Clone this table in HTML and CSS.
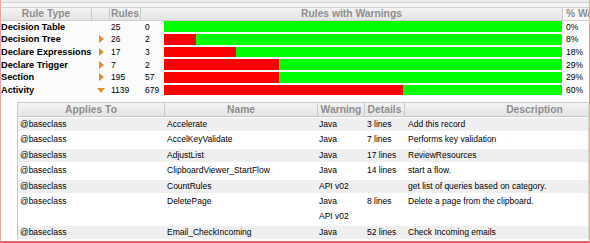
FILE: index.html
```html
<!DOCTYPE html>
<html lang="en">
<head>
  <meta charset="UTF-8">
  <title>Rules with Warnings</title>
  <link rel="stylesheet" href="styles.css">
</head>
<body>
  <div class="frame">
    <div class="top-strip"></div>

    <div class="summary">
      <div class="hcell">Rule Type</div>
      <div class="hcell"></div>
      <div class="hcell">Rules</div>
      <div class="hcell hcell-wide">Rules with Warnings</div>
      <div class="hcell hcell-pct">% Warnings</div>

      <div class="cell name">Decision Table</div>
      <div class="cell"></div>
      <div class="cell num">25</div>
      <div class="cell num2">0</div>
      <div class="cell"><div class="bar"><span class="bar-red" style="width:0%"></span></div></div>
      <div class="cell pct">0%</div>

      <div class="cell name">Decision Tree</div>
      <div class="cell"><span class="arrow-right"></span></div>
      <div class="cell num">26</div>
      <div class="cell num2">2</div>
      <div class="cell"><div class="bar"><span class="bar-red" style="width:8%"></span></div></div>
      <div class="cell pct">8%</div>

      <div class="cell name">Declare Expressions</div>
      <div class="cell"><span class="arrow-right"></span></div>
      <div class="cell num">17</div>
      <div class="cell num2">3</div>
      <div class="cell"><div class="bar"><span class="bar-red" style="width:18%"></span></div></div>
      <div class="cell pct">18%</div>

      <div class="cell name">Declare Trigger</div>
      <div class="cell"><span class="arrow-right"></span></div>
      <div class="cell num">7</div>
      <div class="cell num2">2</div>
      <div class="cell"><div class="bar"><span class="bar-red" style="width:29%"></span></div></div>
      <div class="cell pct">29%</div>

      <div class="cell name">Section</div>
      <div class="cell"><span class="arrow-right"></span></div>
      <div class="cell num">195</div>
      <div class="cell num2">57</div>
      <div class="cell"><div class="bar"><span class="bar-red" style="width:29%"></span></div></div>
      <div class="cell pct">29%</div>

      <div class="cell name">Activity</div>
      <div class="cell"><span class="arrow-down"></span></div>
      <div class="cell num">1139</div>
      <div class="cell num2">679</div>
      <div class="cell"><div class="bar"><span class="bar-red" style="width:60%"></span></div></div>
      <div class="cell pct">60%</div>
    </div>

    <div class="details">
      <div class="drow dhead">
        <div>Applies To</div>
        <div>Name</div>
        <div>Warning</div>
        <div>Details</div>
        <div>Description</div>
      </div>
      <div class="drow odd">
        <div>@baseclass</div><div>Accelerate</div><div>Java</div><div>3 lines</div><div>Add this record</div>
      </div>
      <div class="drow">
        <div>@baseclass</div><div>AccelKeyValidate</div><div>Java</div><div>7 lines</div><div>Performs key validation</div>
      </div>
      <div class="drow odd">
        <div>@baseclass</div><div>AdjustList</div><div>Java</div><div>17 lines</div><div>ReviewResources</div>
      </div>
      <div class="drow">
        <div>@baseclass</div><div>ClipboardViewer_StartFlow</div><div>Java</div><div>14 lines</div><div>start a flow.</div>
      </div>
      <div class="drow odd">
        <div>@baseclass</div><div>CountRules</div><div>API v02</div><div></div><div>get list of queries based on category.</div>
      </div>
      <div class="drow">
        <div>@baseclass</div><div>DeletePage</div><div>Java<br>API v02</div><div>8 lines</div><div>Delete a page from the clipboard.</div>
      </div>
      <div class="drow odd">
        <div>@baseclass</div><div>Email_CheckIncoming</div><div>Java</div><div>52 lines</div><div>Check Incoming emails</div>
      </div>
    </div>
  </div>
</body>
</html>
```

FILE: styles.css
```css
body {
  margin: 0;
  background: #fff;
  font-family: Tahoma, "Liberation Sans", Arial, sans-serif;
  font-size: 8.5px;
  color: #000;
}
.frame {
  width: 590px;
  height: 243px;
  box-sizing: border-box;
  border-left: 1px solid #e9a3a3;
  border-right: 1px solid #e9a3a3;
  border-bottom: 2px solid #e06262;
  overflow: hidden;
}
.top-strip {
  height: 7px;
  background: linear-gradient(#ececec 0 2px, #d4d4d4 2px 3px, #f5f5f5 3px);
}

/* summary table */
.summary {
  display: grid;
  grid-template-columns: 91px 18px 31px 22px 400px 26px;
  grid-template-rows: 13.5px repeat(6, 12.67px);
  background: #fbfbfb;
}
.hcell {
  box-sizing: border-box;
  background: linear-gradient(#f3f3f3, #e4e4e4);
  border-top: 1px solid #d2d2d2;
  border-bottom: 1px solid #cfcfcf;
  border-right: 1px solid #cacaca;
  color: #8e8e8e;
  font-weight: bold;
  font-size: 10.3px;
  line-height: 11.5px;
  text-align: center;
  white-space: nowrap;
  overflow: hidden;
}
.hcell-wide {
  grid-column: span 2;
}
.hcell-pct {
  background: #f6f6f6;
  border-right: none;
  text-align: left;
  padding-left: 3px;
}
.cell {
  display: flex;
  align-items: center;
  white-space: nowrap;
  overflow: hidden;
}
.name {
  font-weight: bold;
  font-size: 9.2px;
}
.num {
  padding-left: 1px;
}
.num2 {
  padding-left: 4px;
}
.pct {
  padding-left: 3px;
}
.bar {
  width: 398px;
  height: 10.7px;
  margin-left: 1px;
  background: #00ff00;
  display: flex;
}
.bar-red {
  background: #ff0000;
  height: 100%;
}
.arrow-right {
  width: 0;
  height: 0;
  margin-left: 7px;
  border-left: 5px solid #d8952c;
  border-top: 4px solid transparent;
  border-bottom: 4px solid transparent;
}
.arrow-down {
  width: 0;
  height: 0;
  margin-left: 5px;
  border-top: 5px solid #d8952c;
  border-left: 4.5px solid transparent;
  border-right: 4.5px solid transparent;
}

/* detail table */
.details {
  margin-top: 5.5px;
  margin-left: 16px;
  width: 570px;
  border-left: 1px solid #c9c9c9;
  border-right: 1px solid #d9d9d9;
  overflow: hidden;
}
.drow {
  display: grid;
  grid-template-columns: 147px 153px 47px 40px 260px;
  line-height: 15.4px;
  width: 647px;
}
.drow > div {
  white-space: nowrap;
  overflow: hidden;
}
.drow > div:nth-child(1) { padding-left: 2px; }
.drow > div:nth-child(2) { padding-left: 2px; }
.drow > div:nth-child(3) { padding-left: 1px; }
.drow > div:nth-child(4) { padding-left: 2px; }
.drow > div:nth-child(5) { padding-left: 3px; }
.odd {
  background: #efefef;
  box-shadow: inset 0 1px 0 #fff, inset 0 -1px 0 #fff;
}
.dhead {
  box-sizing: border-box;
  height: 15px;
  line-height: 13px;
  background: linear-gradient(#f3f3f3, #e4e4e4);
  border-top: 1px solid #c9c9c9;
  border-bottom: 1px solid #c9c9c9;
  color: #8e8e8e;
  font-weight: bold;
  font-size: 10.3px;
}
.dhead > div {
  text-align: center;
  padding-left: 0 !important;
  border-right: 1px solid #cacaca;
}
```
